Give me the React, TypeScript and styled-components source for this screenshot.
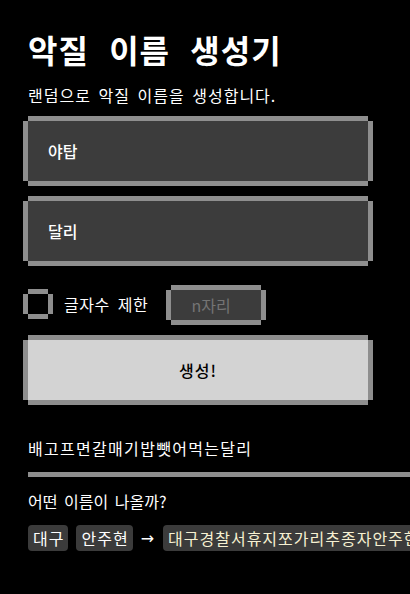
import React, { useState } from "react";
import styled, { createGlobalStyle, css } from "styled-components";

const GRAY = "#8e8e8e";

// pixel-style border: four flat shadows, corners left open
const pixelBorder = css`
  box-shadow: 0 -5px 0 ${GRAY}, 0 5px 0 ${GRAY}, -5px 0 0 ${GRAY}, 5px 0 0 ${GRAY};
`;

const GlobalStyle = createGlobalStyle`
  html, body {
    margin: 0;
    padding: 0;
    background: #000;
    overflow: hidden;
  }
  body {
    font-family: "Noto Sans CJK KR", "Noto Sans", sans-serif;
    color: #fff;
  }
`;

const Page = styled.div`
  display: flex;
  flex-direction: column;
  padding: 33px 0 0 28px;
  width: 340px;
`;

const Title = styled.h1`
  margin: 0;
  font-size: 32px;
  line-height: 32px;
  font-weight: 700;
  letter-spacing: 1px;
  word-spacing: 12px;
  white-space: nowrap;
`;

const Subtitle = styled.p`
  margin: 22px 0 0;
  font-size: 16px;
  line-height: 16px;
  letter-spacing: 1px;
  word-spacing: 3px;
  white-space: nowrap;
`;

const TextField = styled.input<{ $first?: boolean }>`
  ${pixelBorder}
  box-sizing: border-box;
  width: 340px;
  height: 60px;
  margin-top: ${(p) => (p.$first ? "18px" : "20px")};
  padding: 0 20px;
  border: none;
  outline: none;
  background: #3c3c3c;
  color: #fff;
  font-family: inherit;
  font-size: 16px;
  font-weight: 500;
`;

const OptionRow = styled.label`
  display: flex;
  align-items: center;
  margin-top: 29px;
  height: 30px;
`;

const CheckBox = styled.input`
  ${pixelBorder}
  appearance: none;
  width: 20px;
  height: 20px;
  margin: 0 0 2px 0;
  background: #000;
  border: none;
  flex-shrink: 0;
`;

const OptionLabel = styled.span`
  margin: 0 0 2px 16px;
  font-size: 16px;
  line-height: 16px;
  letter-spacing: 0.5px;
  word-spacing: 4px;
  white-space: nowrap;
`;

const LengthField = styled.input`
  ${pixelBorder}
  box-sizing: border-box;
  width: 90px;
  height: 30px;
  margin-left: 23px;
  padding: 0 10px 0 0;
  border: none;
  outline: none;
  background: #3c3c3c;
  color: #fff;
  text-align: center;
  font-family: inherit;
  font-size: 16px;

  &::placeholder {
    color: #747474;
  }
`;

const GenerateButton = styled.button`
  ${pixelBorder}
  width: 340px;
  height: 60px;
  margin-top: 20px;
  border: none;
  background: #d3d3d3;
  color: #000;
  font-family: inherit;
  font-size: 16px;
  font-weight: 500;
  letter-spacing: 1px;
  cursor: pointer;
`;

const Result = styled.div`
  margin-top: 40px;
  font-size: 16px;
  line-height: 16px;
  letter-spacing: 1.3px;
  white-space: nowrap;
`;

const Divider = styled.hr`
  margin: 16px 0 0;
  width: 400px;
  height: 5px;
  border: none;
  background: ${GRAY};
`;

const Question = styled.div`
  margin-top: 16px;
  font-size: 16px;
  line-height: 16px;
  word-spacing: 3px;
  white-space: nowrap;
`;

const ExampleRow = styled.div`
  display: flex;
  align-items: center;
  gap: 8px;
  margin-top: 16px;
  white-space: nowrap;
`;

const Tag = styled.span<{ $result?: boolean }>`
  display: inline-flex;
  align-items: center;
  height: 26px;
  padding: 0 4px 0 5px;
  border-radius: 4px;
  background: #3b3b3b;
  color: ${(p) => (p.$result ? "#f6f1d2" : "#fff")};
  font-size: 16px;
  letter-spacing: 1px;
  flex-shrink: 0;
  margin-left: ${(p) => (p.$result ? "1px" : "0")};
`;

const Arrow = styled.span`
  font-size: 16px;
  color: #fff;
  font-family: "DejaVu Sans", sans-serif;
`;

export default function App() {
  const [limit, setLimit] = useState(false);

  return (
    <Page>
      <GlobalStyle />
      <Title>악질 이름 생성기</Title>
      <Subtitle>랜덤으로 악질 이름을 생성합니다.</Subtitle>
      <TextField $first defaultValue="야탑" />
      <TextField defaultValue="달리" />
      <OptionRow>
        <CheckBox type="checkbox" checked={limit} onChange={() => setLimit(!limit)} />
        <OptionLabel>글자수 제한</OptionLabel>
        <LengthField placeholder="n자리" disabled={!limit} />
      </OptionRow>
      <GenerateButton>생성!</GenerateButton>
      <Result>배고프면갈매기밥뺏어먹는달리</Result>
      <Divider />
      <Question>어떤 이름이 나올까?</Question>
      <ExampleRow>
        <Tag>대구</Tag>
        <Tag>안주현</Tag>
        <Arrow>→</Arrow>
        <Tag $result>대구경찰서휴지쪼가리추종자안주현</Tag>
      </ExampleRow>
    </Page>
  );
}
